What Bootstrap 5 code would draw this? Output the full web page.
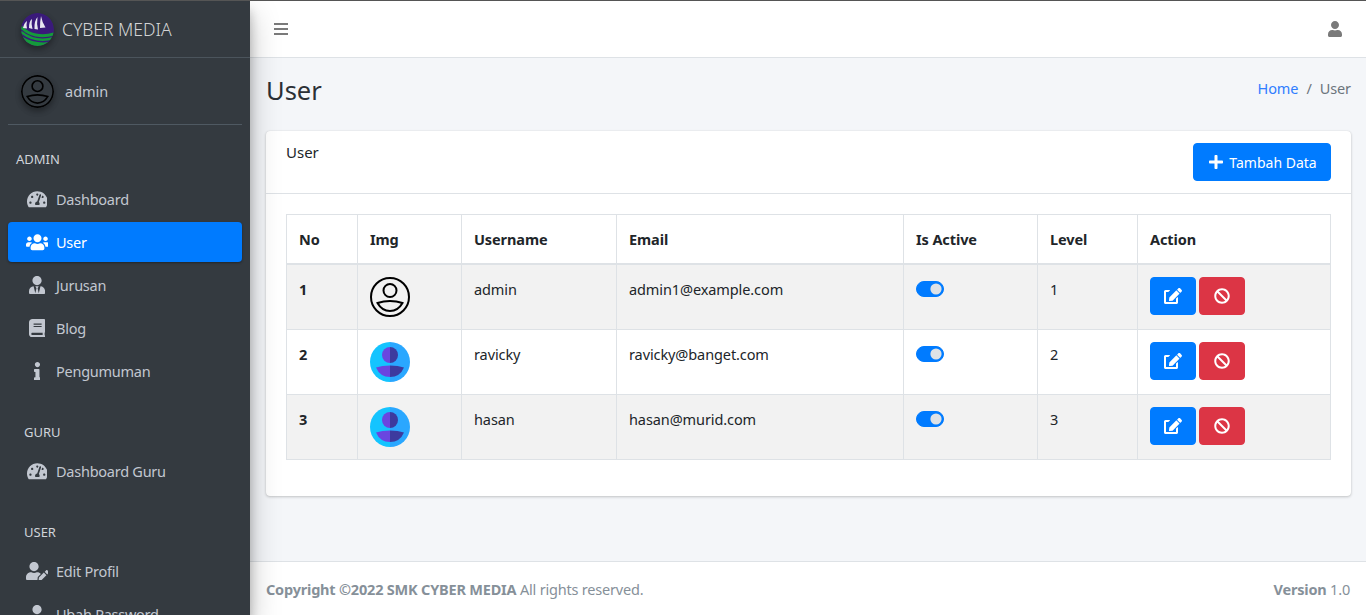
<!DOCTYPE html>
<html lang="en">
<head>
  <meta charset="utf-8" />
  <title>User</title>
  <meta name="viewport" content="width=device-width, initial-scale=1.0" />
  <link href="https://cdn.jsdelivr.net/npm/bootstrap@5.3.2/dist/css/bootstrap.min.css" rel="stylesheet">
  <style>
    body { font-family: "Noto Sans", "Liberation Sans", sans-serif; font-size: 14.5px; line-height: 24px; color: #212529; height: 100vh; overflow: hidden; border-top: 1px solid #555; background: #f4f6f9; }
    .app-wrap { height: 100%; }
    .main-col { min-width: 0; }
    .side { width: 250px; flex: none; background: #343a40; color: #c2c7d0; overflow: hidden; box-shadow: 0 14px 28px rgba(0,0,0,.25), 0 10px 10px rgba(0,0,0,.22); position: relative; z-index: 2; }
    .side > * { flex: none; }
    .side-brand { height: 57px; padding-left: 21px; border-bottom: 1px solid #4b545c; color: rgba(255,255,255,.8); font-size: 17.5px; font-weight: 300; gap: 8px; }
    .side-user { height: 67px; margin: 0 8px; padding-left: 13px; border-bottom: 1px solid #4f5962; gap: 11px; }
    .side-round { width: 33px; height: 33px; border-radius: 50%; box-shadow: 0 3px 6px rgba(0,0,0,.16), 0 3px 6px rgba(0,0,0,.23); flex: none; }
    .side-nav { padding: 22px 8px 0; letter-spacing: -.25px; --bs-nav-link-font-size: 14.5px; --bs-nav-link-color: #c2c7d0; --bs-nav-link-hover-color: #c2c7d0; --bs-nav-pills-link-active-bg: #007bff; --bs-nav-pills-border-radius: 4px; }
    .side-head { font-size: 13px; line-height: 24px; padding-left: 16px; margin-top: 26px; margin-bottom: 7px; color: #d0d4db; letter-spacing: 0; }
    .side-head:first-child { margin-top: 0; padding-left: 8px; margin-bottom: 8px; }
    .side-nav .nav-link { height: 40px; flex: none; padding: 8px 16px; margin-bottom: 3px; display: flex; align-items: center; gap: 6px; }
    .side-nav .nav-link.active { box-shadow: 0 1px 3px rgba(0,0,0,.12), 0 1px 2px rgba(0,0,0,.24); }
    .ico-box { width: 26px; display: flex; justify-content: center; flex: none; }
    .ico-box svg { height: 18.4px; fill: currentColor; }
    .top-bar { height: 57px; background: #fff; border-bottom: 1px solid #dee2e6; padding: 0 24px; flex: none; }
    .top-bar svg { fill: #7a7a7a; }
    .page-head { padding: 15px 15px 0 16px; height: 73px; flex: none; }
    .page-head h1 { font-size: 25.5px; line-height: 34.5px; font-weight: 400; margin: 0; color: #2b3036; }
    .page-head .breadcrumb { --bs-breadcrumb-margin-bottom: 0; --bs-breadcrumb-divider-color: #6c757d; --bs-breadcrumb-item-active-color: #6c757d; margin-top: 3px; letter-spacing: -.1px; }
    .page-head a { color: #2f7dff; text-decoration: none; }
    .main-card { margin: 0 15px 0 16px; flex: none; --bs-card-border-width: 0; --bs-card-border-radius: 4px; box-shadow: 0 0 1px rgba(0,0,0,.125), 0 1px 3px rgba(0,0,0,.2); }
    .main-card .card-header { background: transparent; border-bottom: 1px solid #dee2e6; height: 63px; padding: 9px 20px 12px; }
    .main-card .card-body { padding: 20px; }
    .head-title { line-height: 24px; font-size: 15px; }
    .btn-main { --bs-btn-bg: #007bff; --bs-btn-border-color: #007bff; --bs-btn-border-radius: 4px; --bs-btn-font-size: 14px; }
    .btn-stop { --bs-btn-bg: #dc3545; --bs-btn-border-color: #dc3545; --bs-btn-border-radius: 4px; }
    .btn-main svg, .btn-stop svg { fill: #fff; height: 16px; display: block; }
    .act-btn { width: 46px; height: 38px; padding: 0; display: flex; align-items: center; justify-content: center; }
    .add-btn { width: 138px; height: 38px; padding: 0 0 0 2px; margin-top: 3px; gap: 6px; display: flex; align-items: center; justify-content: center; }
    .act-gap { gap: 3px; }
    .user-table { table-layout: fixed; letter-spacing: -.1px; --bs-table-striped-bg: #f2f2f2; --bs-table-border-color: #dee2e6; }
    .user-table > :not(caption) > * > * { padding: 12px; }
    .user-table thead th { border-bottom-width: 2px; }
    .user-table tbody tr { height: 65px; }
    .user-table .form-check { min-height: 0; margin: 0; padding-left: 0; }
    .user-table .form-switch .form-check-input { width: 28px; height: 16px; margin: 4px 0 0; float: none; display: block; background-color: #007bff; border-color: #007bff; background-image: url("data:image/svg+xml,%3csvg xmlns='http://www.w3.org/2000/svg' viewBox='-4 -4 8 8'%3e%3ccircle r='3.2' fill='%23dee2e6'/%3e%3c/svg%3e"); }
    .tbl-ava { width: 40px; height: 40px; display: block; }
    .page-foot { height: 54px; flex: none; background: #fff; border-top: 1px solid #dee2e6; padding: 0 16px; color: #869099; margin-top: auto; letter-spacing: -.2px; }
  </style>
</head>
<body>
  <svg width="0" height="0" class="position-absolute">
    <defs>
      <symbol id="ava-line" viewBox="0 0 40 40">
        <circle cx="20" cy="20" r="19" fill="none" stroke="#000" stroke-width="2"/>
        <circle cx="20" cy="13.500" r="6.500" fill="none" stroke="#000" stroke-width="2"/>
        <path d="M7.500 26Q20 22 32.500 26Q28 34 20 34Q12 34 7.500 26Z" fill="none" stroke="#000" stroke-width="2"/>
      </symbol>
      <symbol id="ava-blue" viewBox="0 0 40 40">
        <path d="M20 0a20 20 0 0 0 0 40Z" fill="#14c4ff"/>
        <path d="M20 0a20 20 0 0 1 0 40Z" fill="#2aa7ff"/>
        <path d="M20 5a8 8 0 0 0 0 16Z" fill="#6a45e0"/>
        <path d="M20 5a8 8 0 0 1 0 16Z" fill="#3d3a9e"/>
        <path d="M20 23.500Q12 23.500 6 25.500Q10 35 20 35Z" fill="#6a45e0"/>
        <path d="M20 23.500Q28 23.500 34 25.500Q30 35 20 35Z" fill="#3d3a9e"/>
      </symbol>
      <symbol id="i-tach" viewBox="0 0 576 512"><path d="M288 32C128.940 32 0 160.940 0 320c0 52.800 14.250 102.260 39.060 144.800 5.610 9.620 16.300 15.200 27.440 15.200h443c11.140 0 21.830-5.580 27.440-15.200C561.750 422.260 576 372.800 576 320c0-159.060-128.940-288-288-288zm0 64c14.710 0 26.580 10.130 30.320 23.650-1.110 2.260-2.640 4.230-3.450 6.670l-9.220 27.670c-5.130 3.490-10.970 6.010-17.640 6.010-17.670 0-32-14.330-32-32S270.330 96 288 96zM96 384c-17.670 0-32-14.330-32-32s14.330-32 32-32 32 14.330 32 32-14.330 32-32 32zm48-160c-17.670 0-32-14.330-32-32s14.330-32 32-32 32 14.330 32 32-14.330 32-32 32zm246.770-72.410l-61.330 184C343.130 347.330 352 364.540 352 384c0 11.720-3.380 22.550-8.880 32H232.880c-5.500-9.450-8.880-20.280-8.880-32 0-33.940 26.500-61.430 59.900-63.590l61.340-184.010c4.170-12.560 17.730-19.450 30.360-15.170 12.570 4.190 19.350 17.790 15.170 30.360zm14.660 57.200l15.520-46.550c3.470-1.290 7.130-2.230 11.050-2.230 17.670 0 32 14.330 32 32s-14.330 32-32 32c-11.380-.01-20.890-6.280-26.570-15.220zM480 384c-17.670 0-32-14.330-32-32s14.330-32 32-32 32 14.330 32 32-14.330 32-32 32z"/></symbol>
      <symbol id="i-user" viewBox="0 0 448 512"><path d="M224 256c70.700 0 128-57.300 128-128S294.700 0 224 0 96 57.300 96 128s57.300 128 128 128zm89.600 32h-16.700c-22.200 10.200-46.900 16-72.900 16s-50.600-5.800-72.900-16h-16.700C60.200 288 0 348.200 0 422.400V464c0 26.500 21.500 48 48 48h352c26.500 0 48-21.500 48-48v-41.600c0-74.200-60.200-134.400-134.400-134.400z"/></symbol>
    </defs>
  </svg>

  <div class="app-wrap d-flex">
    <aside class="side d-flex flex-column">
      <div class="side-brand d-flex align-items-center">
        <svg class="side-round" viewBox="0 0 33 33">
          <defs><clipPath id="logo-clip"><circle cx="16.500" cy="16.500" r="16.500"/></clipPath></defs>
          <g clip-path="url(#logo-clip)">
            <rect width="33" height="33" fill="#3a1a7a"/>
            <path d="M0 14C8 22 20 25 33 21" fill="none" stroke="#149a3a" stroke-width="3"/>
            <path d="M0 19C9 26 20 29 33 25" fill="none" stroke="#149a3a" stroke-width="2.500"/>
            <path d="M2 24C10 29 22 31 33 28V33H0Z" fill="#149a3a"/>
            <path d="M2 15Q3 10 6 8Q5 12 6 15.500ZM8 15Q8 8 11 6Q10 11 11.500 16ZM13.500 16Q13 8 16.500 4Q15.500 11 17 16.500ZM19 15Q19 8 20 3Q21 9 24.500 14.500Z" fill="#e8e6f0"/>
          </g>
        </svg>
        <span>CYBER MEDIA</span>
      </div>
      <div class="side-user d-flex align-items-center">
        <svg class="side-round"><use href="#ava-line"/></svg>
        <span>admin</span>
      </div>
      <nav class="nav nav-pills flex-column flex-nowrap side-nav">
        <div class="side-head">ADMIN</div>
        <a class="nav-link" href="#"><span class="ico-box"><svg viewBox="0 0 576 512"><use href="#i-tach"/></svg></span>Dashboard</a>
        <a class="nav-link active" href="#"><span class="ico-box"><svg viewBox="0 0 640 512"><path d="M96 224c35.300 0 64-28.700 64-64s-28.700-64-64-64-64 28.700-64 64 28.700 64 64 64zm448 0c35.300 0 64-28.700 64-64s-28.700-64-64-64-64 28.700-64 64 28.700 64 64 64zm32 32h-64c-17.600 0-33.500 7.100-45.100 18.600 40.300 22.100 68.900 62 75.100 109.400h66c17.700 0 32-14.300 32-32v-32c0-35.300-28.700-64-64-64zm-256 0c61.900 0 112-50.100 112-112S381.900 32 320 32 208 82.100 208 144s50.100 112 112 112zm76.800 32h-8.300c-20.800 10-43.900 16-68.500 16s-47.600-6-68.500-16h-8.300C179.600 288 128 339.600 128 403.200V432c0 26.500 21.500 48 48 48h288c26.500 0 48-21.500 48-48v-28.800c0-63.600-51.600-115.200-115.200-115.200zm-223.700-13.400C161.500 263.100 145.600 256 128 256H64c-35.300 0-64 28.700-64 64v32c0 17.700 14.300 32 32 32h65.900c6.300-47.400 34.900-87.300 75.200-109.400z"/></svg></span>User</a>
        <a class="nav-link" href="#"><span class="ico-box"><svg viewBox="0 0 448 512"><path d="M224 256c70.700 0 128-57.300 128-128S294.700 0 224 0 96 57.300 96 128s57.300 128 128 128zm95.800 32.600L272 480l-32-136 32-56h-96l32 56-32 136-47.800-191.400C56.900 292 0 350.300 0 422.400V464c0 26.500 21.500 48 48 48h352c26.500 0 48-21.500 48-48v-41.600c0-72.100-56.900-130.400-128.200-133.800z"/></svg></span>Jurusan</a>
        <a class="nav-link" href="#"><span class="ico-box"><svg viewBox="0 0 448 512"><path d="M448 360V24c0-13.300-10.700-24-24-24H96C43 0 0 43 0 96v320c0 53 43 96 96 96h328c13.300 0 24-10.700 24-24v-16c0-7.500-3.500-14.300-8.900-18.700-4.200-15.400-4.200-59.300 0-74.700 5.400-4.300 8.900-11.100 8.900-18.600zM128 134c0-3.300 2.700-6 6-6h212c3.300 0 6 2.700 6 6v20c0 3.300-2.700 6-6 6H134c-3.300 0-6-2.700-6-6v-20zm0 64c0-3.300 2.700-6 6-6h212c3.300 0 6 2.700 6 6v20c0 3.300-2.700 6-6 6H134c-3.300 0-6-2.700-6-6v-20zm253.400 250H96c-17.700 0-32-14.300-32-32 0-17.600 14.400-32 32-32h285.400c-1.900 17.100-1.900 46.900 0 64z"/></svg></span>Blog</a>
        <a class="nav-link" href="#"><span class="ico-box"><svg viewBox="0 0 192 512"><path d="M20 424.229h20V279.771H20c-11.046 0-20-8.954-20-20V212c0-11.046 8.954-20 20-20h112c11.046 0 20 8.954 20 20v212.229h20c11.046 0 20 8.954 20 20V492c0 11.046-8.954 20-20 20H20c-11.046 0-20-8.954-20-20v-47.771c0-11.046 8.954-20 20-20zM96 0C56.235 0 24 32.235 24 72s32.235 72 72 72 72-32.235 72-72S135.764 0 96 0z"/></svg></span>Pengumuman</a>
        <div class="side-head">GURU</div>
        <a class="nav-link" href="#"><span class="ico-box"><svg viewBox="0 0 576 512"><use href="#i-tach"/></svg></span>Dashboard Guru</a>
        <div class="side-head">USER</div>
        <a class="nav-link" href="#"><span class="ico-box"><svg viewBox="0 0 640 512"><path d="M224 256c70.700 0 128-57.300 128-128S294.700 0 224 0 96 57.300 96 128s57.300 128 128 128zm89.600 32h-16.700c-22.200 10.200-46.900 16-72.900 16s-50.600-5.800-72.900-16h-16.700C60.200 288 0 348.200 0 422.400V464c0 26.500 21.500 48 48 48h274.900c-2.400-6.800-3.400-14-2.600-21.300l6.800-60.900 1.200-11.100 7.900-7.900 77.300-77.300c-24.500-27.700-60-45.500-99.900-45.500zm45.300 145.300l-6.800 61c-1.100 10.200 7.500 18.800 17.600 17.600l60.900-6.800 137.900-137.900-71.700-71.700-137.900 137.800zM633 268.900L595.100 231c-9.300-9.300-24.500-9.300-33.800 0l-37.800 37.800-4.100 4.100 71.800 71.700 41.800-41.800c9.300-9.400 9.300-24.500 0-33.900z"/></svg></span>Edit Profil</a>
        <a class="nav-link" href="#"><span class="ico-box"><svg viewBox="0 0 448 512"><use href="#i-user"/></svg></span>Ubah Password</a>
      </nav>
    </aside>

    <div class="main-col flex-grow-1 d-flex flex-column">
      <header class="top-bar d-flex align-items-center justify-content-between">
        <svg width="14" height="16" viewBox="0 0 14 16"><rect y="2" width="14" height="2"/><rect y="7" width="14" height="2"/><rect y="12" width="14" height="2"/></svg>
        <svg width="14" height="16" viewBox="0 0 448 512"><use href="#i-user"/></svg>
      </header>

      <div class="page-head d-flex align-items-start justify-content-between">
        <h1>User</h1>
        <ol class="breadcrumb">
          <li class="breadcrumb-item"><a href="#">Home</a></li>
          <li class="breadcrumb-item active">User</li>
        </ol>
      </div>

      <div class="card main-card">
        <div class="card-header d-flex justify-content-between align-items-start">
          <span class="head-title">User</span>
          <a href="#" class="btn btn-primary btn-main add-btn"><svg viewBox="0 0 448 512"><path d="M416 208H272V64c0-17.670-14.330-32-32-32h-32c-17.670 0-32 14.330-32 32v144H32c-17.670 0-32 14.330-32 32v32c0 17.670 14.330 32 32 32h144v144c0 17.670 14.330 32 32 32h32c17.670 0 32-14.330 32-32V304h144c17.670 0 32-14.330 32-32v-32c0-17.670-14.330-32-32-32z"/></svg>Tambah Data</a>
        </div>
        <div class="card-body">
          <table class="table table-bordered table-striped user-table">
            <colgroup><col style="width:71px"><col style="width:104px"><col style="width:155px"><col style="width:287px"><col style="width:134px"><col style="width:100px"><col style="width:193px"></colgroup>
            <thead>
              <tr><th>No</th><th>Img</th><th>Username</th><th>Email</th><th>Is Active</th><th>Level</th><th>Action</th></tr>
            </thead>
            <tbody id="userRows"></tbody>
          </table>
        </div>
      </div>

      <footer class="page-foot d-flex align-items-center justify-content-between">
        <span><strong>Copyright ©2022 SMK CYBER MEDIA</strong> All rights reserved.</span>
        <span><strong>Version</strong> 1.0</span>
      </footer>
    </div>
  </div>

  <script>
    const users = [
      { no: 1, ava: "ava-line", name: "admin", email: "admin1@example.com", level: 1 },
      { no: 2, ava: "ava-blue", name: "ravicky", email: "ravicky@banget.com", level: 2 },
      { no: 3, ava: "ava-blue", name: "hasan", email: "hasan@murid.com", level: 3 }
    ];
    const editIcon = `<svg viewBox="0 0 576 512"><path d="M402.600 83.200l90.200 90.200c3.800 3.800 3.800 10 0 13.800L274.400 405.600l-92.800 10.300c-12.400 1.400-22.900-9.100-21.500-21.500l10.300-92.800L388.800 83.200c3.800-3.800 10-3.800 13.800 0zm162-22.900l-48.800-48.800c-15.200-15.200-39.900-15.200-55.200 0l-35.400 35.400c-3.800 3.800-3.800 10 0 13.800l90.200 90.200c3.800 3.800 10 3.800 13.800 0l35.400-35.400c15.200-15.300 15.200-40 0-55.200zM384 346.200V448H64V128h73.900c3.700 0 7.200-1.500 9.900-4.100l40-40c7.600-7.600 2.200-20.500-8.500-20.500H48C21.500 64 0 85.500 0 112v352c0 26.500 21.500 48 48 48h352c26.500 0 48-21.500 48-48V306.200c0-10.700-12.900-16-20.500-8.500l-40 40c-2.600 2.700-4.100 6.200-4.100 9.900z"/></svg>`;
    const banIcon = `<svg viewBox="0 0 512 512"><path d="M256 8C119.034 8 8 119.033 8 256s111.034 248 248 248 248-111.034 248-248S392.967 8 256 8zm130.108 117.892c65.448 65.448 70 165.481 20.677 235.637L150.470 105.216c70.204-49.356 170.226-44.735 235.638 20.676zM125.892 386.108c-65.448-65.448-70-165.481-20.677-235.637L361.530 406.784c-70.203 49.356-170.226 44.736-235.638-20.676z"/></svg>`;
    document.getElementById("userRows").innerHTML = users.map(u => `<tr>
      <th>${u.no}</th>
      <td><svg class="tbl-ava"><use href="#${u.ava}"/></svg></td>
      <td>${u.name}</td>
      <td>${u.email}</td>
      <td><div class="form-check form-switch"><input class="form-check-input" type="checkbox" checked></div></td>
      <td>${u.level}</td>
      <td><div class="d-flex act-gap"><a href="#" class="btn btn-primary btn-main act-btn">${editIcon}</a><a href="#" class="btn btn-danger btn-stop act-btn">${banIcon}</a></div></td>
    </tr>`).join("");
  </script>
  <script src="https://cdn.jsdelivr.net/npm/bootstrap@5.3.2/dist/js/bootstrap.bundle.min.js"></script>
</body>
</html>
